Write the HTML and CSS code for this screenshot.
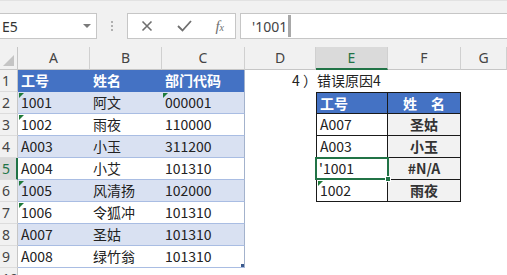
FILE: index.html
```html
<!DOCTYPE html>
<html>
<head>
<meta charset="utf-8">
<link rel="stylesheet" href="styles.css">
</head>
<body>
<div class="toolbar">
  <div class="namebox"><span class="nb-text">E5</span><span class="nb-arrow"></span></div>
  <div class="grip"><i></i><i></i><i></i></div>
  <div class="fnbox">
    <svg class="ic" width="12" height="12" viewBox="0 0 12 12"><path d="M1.5 1.5 L10.5 10.5 M10.5 1.5 L1.5 10.5" stroke="#6f6f6f" stroke-width="1.6" fill="none"/></svg>
    <svg class="ic" width="15" height="12" viewBox="0 0 15 12"><path d="M1 6 L5.5 10.5 L14 1" stroke="#6f6f6f" stroke-width="1.8" fill="none"/></svg>
    <span class="fx">f<span class="fx-x">x</span></span>
  </div>
  <div class="formula"><span class="f-text">'1001</span><span class="caret"></span></div>
</div>

<div class="sheet">
  <!-- header row -->
  <div class="corner"><span class="corner-tri"></span></div>
  <div class="ch">A</div><div class="ch">B</div><div class="ch">C</div><div class="ch">D</div>
  <div class="ch ch-sel">E</div><div class="ch">F</div><div class="ch">G</div>

  <!-- row 1 -->
  <div class="rh">1</div>
  <div class="c th">工号</div><div class="c th">姓名</div><div class="c th tr">部门代码</div>
  <div class="c note">4 ）错误原因4</div><div class="c"></div><div class="c"></div><div class="c"></div>

  <!-- row 2 -->
  <div class="rh">2</div>
  <div class="c tb band tri">1001</div><div class="c tb band">阿文</div><div class="c tb band tr tri">000001</div>
  <div class="c"></div><div class="c rt rt-l rt-t rt-h">工号</div><div class="c rt rt-t rt-h ctr">姓　名</div><div class="c"></div>

  <!-- row 3 -->
  <div class="rh">3</div>
  <div class="c tb tri">1002</div><div class="c tb">雨夜</div><div class="c tb tr">110000</div>
  <div class="c"></div><div class="c rt rt-l">A007</div><div class="c rt rt-f">圣姑</div><div class="c"></div>

  <!-- row 4 -->
  <div class="rh">4</div>
  <div class="c tb band">A003</div><div class="c tb band">小玉</div><div class="c tb band tr">311200</div>
  <div class="c"></div><div class="c rt rt-l">A003</div><div class="c rt rt-f">小玉</div><div class="c"></div>

  <!-- row 5 -->
  <div class="rh rh-sel">5</div>
  <div class="c tb">A004</div><div class="c tb">小艾</div><div class="c tb tr">101310</div>
  <div class="c"></div><div class="c rt rt-l sel">'1001<span class="handle"></span></div><div class="c rt rt-f">#N/A</div><div class="c"></div>

  <!-- row 6 -->
  <div class="rh">6</div>
  <div class="c tb band tri">1005</div><div class="c tb band">风清扬</div><div class="c tb band tr">102000</div>
  <div class="c"></div><div class="c rt rt-l tri">1002</div><div class="c rt rt-f">雨夜</div><div class="c"></div>

  <!-- row 7 -->
  <div class="rh">7</div>
  <div class="c tb tri">1006</div><div class="c tb">令狐冲</div><div class="c tb tr">101310</div>
  <div class="c"></div><div class="c"></div><div class="c"></div><div class="c"></div>

  <!-- row 8 -->
  <div class="rh">8</div>
  <div class="c tb band">A007</div><div class="c tb band">圣姑</div><div class="c tb band tr">101310</div>
  <div class="c"></div><div class="c"></div><div class="c"></div><div class="c"></div>

  <!-- row 9 -->
  <div class="rh">9</div>
  <div class="c tb">A008</div><div class="c tb">绿竹翁</div><div class="c tb tr last">101310</div>
  <div class="c"></div><div class="c"></div><div class="c"></div><div class="c"></div>

  <!-- row 10 -->
  <div class="rh">10</div>
  <div class="c"></div><div class="c"></div><div class="c"></div>
  <div class="c"></div><div class="c"></div><div class="c"></div><div class="c"></div>
</div>
</body>
</html>
```

FILE: styles.css
```css
* { box-sizing: border-box; }
html, body { margin: 0; padding: 0; }
body {
  width: 507px;
  height: 275px;
  overflow: hidden;
  background: #ffffff;
  font-family: "Noto Sans CJK SC", "Noto Sans", sans-serif;
}

/* ---------- toolbar ---------- */
.toolbar {
  height: 47px;
  background: #f1f1f1;
  display: flex;
  align-items: flex-start;
  padding-top: 12px;
  border-top: 1px solid #e2e2e2;
}
.namebox {
  width: 97px;
  height: 26px;
  background: #fff;
  border: 1px solid #c6c6c6;
  border-left: none;
  display: flex;
  align-items: center;
  justify-content: space-between;
  padding: 0 4px 0 2px;
  font-family: "Noto Sans", sans-serif;
  font-size: 14px;
  color: #333;
}
.nb-arrow {
  width: 0; height: 0;
  border-left: 4px solid transparent;
  border-right: 4px solid transparent;
  border-top: 4px solid #7a7a7a;
  margin-right: 1px;
}
.grip {
  width: 30px;
  height: 26px;
  display: flex;
  flex-direction: column;
  align-items: center;
  justify-content: center;
  gap: 2px;
}
.grip i {
  display: block;
  width: 2px;
  height: 2px;
  background: #b0b0b0;
}
.fnbox {
  width: 109px;
  height: 26px;
  background: #fff;
  border: 1px solid #c6c6c6;
  display: flex;
  align-items: center;
  justify-content: space-between;
  padding: 0 11px 0 13px;
}
.fx {
  font-family: "Liberation Serif", serif;
  font-style: italic;
  font-size: 15px;
  color: #6f6f6f;
  line-height: 1;
}
.fx-x { font-size: 10px; }
.formula {
  flex: 1;
  margin-left: 4px;
  height: 26px;
  background: #fff;
  border: 1px solid #c6c6c6;
  border-right: none;
  display: flex;
  align-items: center;
  padding-left: 11px;
  font-family: "Noto Sans", sans-serif;
  font-size: 14px;
  color: #444;
}
.caret {
  width: 3px;
  height: 22px;
  background: #a8a8a8;
  margin-left: 1px;
}

/* ---------- sheet ---------- */
.sheet {
  display: grid;
  grid-template-columns: 18px 72px 72px 83px 71px 72px 73px 46px;
  grid-template-rows: 23px repeat(10, 22px);
}
.corner {
  position: relative;
  background: #f1f1f1;
  border-right: 1px solid #c6c6c6;
  border-bottom: 1px solid #c6c6c6;
}
.corner-tri {
  position: absolute;
  right: 3px;
  bottom: 3px;
  width: 0; height: 0;
  border-left: 11px solid transparent;
  border-bottom: 11px solid #c4c4c4;
}
.ch {
  background: #f1f1f1;
  border-right: 1px solid #d0d0d0;
  border-bottom: 1px solid #c6c6c6;
  text-align: center;
  font-family: "Noto Sans", sans-serif;
  font-size: 14px;
  line-height: 22px;
  color: #444;
}
.ch-sel {
  background: #dadada;
  border-bottom: 2px solid #217346;
  color: #217346;
}
.rh {
  background: #f1f1f1;
  border-right: 1px solid #c6c6c6;
  border-bottom: 1px solid #dcdcdc;
  font-family: "Noto Sans", sans-serif;
  font-size: 14px;
  line-height: 21px;
  color: #444;
  padding-left: 2px;
  white-space: nowrap;
  overflow: hidden;
}
.rh-sel {
  background: #dadada;
  border-right: 2px solid #217346;
  color: #217346;
}

.c {
  position: relative;
  font-size: 14px;
  line-height: 21px;
  color: #222;
  padding-left: 3px;
  white-space: nowrap;
}
.note {
  padding-left: 47px;
  overflow: visible;
  z-index: 2;
}

/* left table */
.th {
  background: #4472c4;
  color: #fff;
  font-weight: bold;
}
.tb {
  border-bottom: 1px solid #a9bde3;
}
.band { background: #d9e1f2; }
.tr { border-right: 1px solid #a3b2cc; }
.last::after {
  content: "";
  position: absolute;
  right: 0;
  bottom: 0;
  width: 3px;
  height: 3px;
  background: #3b5a8c;
}

/* number-as-text indicator */
.tri::before {
  content: "";
  position: absolute;
  left: 1px;
  top: 1px;
  width: 0; height: 0;
  border-top: 5px solid #1f7a3a;
  border-right: 5px solid transparent;
}

/* right table */
.rt {
  border-right: 1px solid #1a1a1a;
  border-bottom: 1px solid #1a1a1a;
}
.rt-l { border-left: 1px solid #1a1a1a; }
.rt-t { border-top: 1px solid #1a1a1a; line-height: 20px; }
.rt-h {
  background: #4472c4;
  color: #fff;
  font-weight: bold;
}
.ctr { text-align: center; padding-left: 0; }
.rt-f {
  background: #f2f2f2;
  text-align: center;
  padding-left: 0;
  font-weight: bold;
  color: #333;
}
.sel {
  border: 2px solid #217346;
  padding-left: 2px;
  line-height: 18px;
  margin: -1px -1px 0 -1px;
  z-index: 3;
}
.handle {
  position: absolute;
  right: -4px;
  bottom: -4px;
  width: 6px;
  height: 6px;
  background: #217346;
  border: 1px solid #fff;
}
```
